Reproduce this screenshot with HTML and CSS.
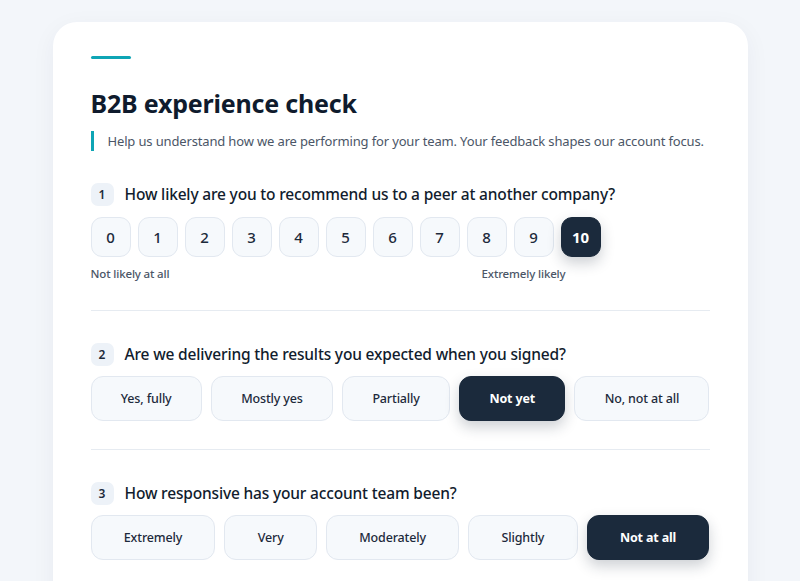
FILE: index.html
```html
<!DOCTYPE html>
<html lang="en">
<head>
<meta charset="utf-8">
<title>B2B experience check</title>
<link rel="stylesheet" href="styles.css">
</head>
<body>
<main class="card">
  <div class="accent"></div>
  <h1 class="title">B2B experience check</h1>
  <p class="subtitle">Help us understand how we are performing for your team. Your feedback shapes our account focus.</p>

  <section class="question first">
    <div class="q-head"><span class="badge">1</span><h2 class="q-text">How likely are you to recommend us to a peer at another company?</h2></div>
    <div class="scale">
      <button class="num">0</button>
      <button class="num">1</button>
      <button class="num">2</button>
      <button class="num">3</button>
      <button class="num">4</button>
      <button class="num">5</button>
      <button class="num">6</button>
      <button class="num">7</button>
      <button class="num">8</button>
      <button class="num">9</button>
      <button class="num selected">10</button>
    </div>
    <div class="scale-labels"><span>Not likely at all</span><span>Extremely likely</span></div>
  </section>

  <section class="question">
    <div class="q-head"><span class="badge">2</span><h2 class="q-text">Are we delivering the results you expected when you signed?</h2></div>
    <div class="options">
      <button class="opt">Yes, fully</button>
      <button class="opt">Mostly yes</button>
      <button class="opt">Partially</button>
      <button class="opt selected">Not yet</button>
      <button class="opt">No, not at all</button>
    </div>
  </section>

  <section class="question">
    <div class="q-head"><span class="badge">3</span><h2 class="q-text">How responsive has your account team been?</h2></div>
    <div class="options">
      <button class="opt">Extremely</button>
      <button class="opt">Very</button>
      <button class="opt">Moderately</button>
      <button class="opt">Slightly</button>
      <button class="opt selected">Not at all</button>
    </div>
  </section>
</main>
</body>
</html>
```
FILE: styles.css
```css
* { box-sizing: border-box; }
html, body { margin: 0; padding: 0; }
body {
  background: #f3f6fa;
  font-family: "Noto Sans", "Open Sans", sans-serif;
  color: #0f1b2d;
  padding-top: 22px;
  overflow: hidden;
}
.card {
  width: 695px;
  margin: 0 auto;
  background: #ffffff;
  border-radius: 24px;
  box-shadow: 0 6px 24px rgba(20, 40, 70, 0.05);
  padding: 34px 38px 40px;
  min-height: 620px;
}
.accent {
  width: 40px;
  height: 3px;
  background: #0ea5b5;
  border-radius: 2px;
}
.title {
  margin: 28px 0 0;
  font-size: 25px;
  line-height: 32px;
  font-weight: 700;
  color: #0f1b2d;
  letter-spacing: -0.2px;
}
.subtitle {
  margin: 12px 0 0;
  border-left: 3px solid #0ea5b5;
  padding-left: 14px;
  font-size: 13px;
  letter-spacing: -0.15px;
  line-height: 20px;
  color: #4b5667;
  white-space: nowrap;
}
.question {
  padding: 31px 0 28px;
  border-top: 1px solid #e6ebf1;
}
.question.first {
  border-top: none;
  padding-top: 31px;
}
.q-head {
  display: flex;
  align-items: center;
  gap: 11px;
  height: 24px;
  margin-bottom: 10px;
}
.first .q-head {
  margin-bottom: 11px;
}
.badge {
  width: 23px;
  height: 23px;
  border-radius: 7px;
  background: #edf2f8;
  display: flex;
  align-items: center;
  justify-content: center;
  font-size: 12px;
  font-weight: 600;
  color: #1d2a3b;
}
.q-text {
  margin: 0;
  font-size: 15.5px;
  letter-spacing: -0.17px;
  font-weight: 500;
  color: #111c2d;
  line-height: 24px;
}
.scale {
  display: flex;
  gap: 7px;
}
button {
  font-family: inherit;
  cursor: pointer;
}
.num {
  width: 40px;
  height: 40px;
  border-radius: 11px;
  border: 1px solid #e2e8f0;
  background: #f6f9fc;
  font-size: 15px;
  font-weight: 500;
  color: #1d2a3b;
  padding: 0;
}
.num.selected, .opt.selected {
  background: #1b2a3c;
  border-color: #1b2a3c;
  color: #ffffff;
  font-weight: 700;
  box-shadow: 0 6px 14px rgba(27, 42, 60, 0.22);
}
.scale-labels {
  display: flex;
  justify-content: space-between;
  width: 475px;
  margin-top: 9px;
  font-size: 11.5px;
  letter-spacing: -0.15px;
  line-height: 16px;
  font-weight: 500;
  color: #4b5667;
}
.options {
  display: flex;
  gap: 9px;
}
.opt {
  flex: 1 1 auto;
  height: 45px;
  border-radius: 12px;
  border: 1px solid #e2e8f0;
  background: #f6f9fc;
  font-size: 12.5px;
  letter-spacing: -0.15px;
  font-weight: 500;
  color: #1d2a3b;
  padding: 0 12px;
}
```
